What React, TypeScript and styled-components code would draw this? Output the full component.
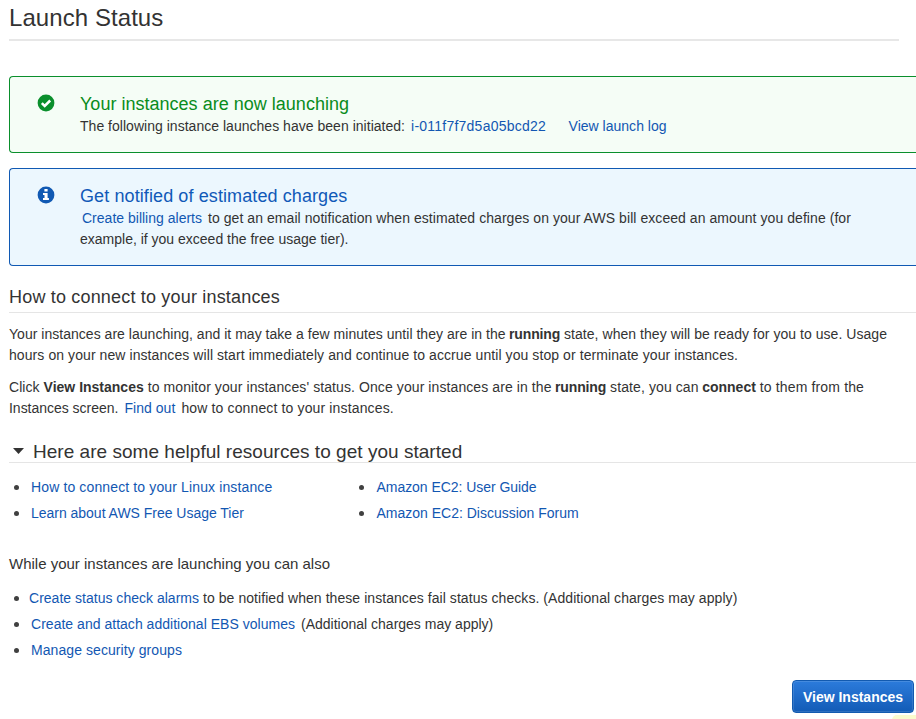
import React from "react";
import styled, { createGlobalStyle } from "styled-components";

const GlobalStyle = createGlobalStyle`
  * { box-sizing: border-box; }
  html, body { margin: 0; padding: 0; background: #fff; overflow: hidden; }
  body { font-family: "Liberation Sans", Arial, Helvetica, sans-serif; font-size: 14px; color: #333; }
  h1, h2, h3, p, ul { margin: 0; padding: 0; font-weight: 400; }
`;

type Tone = "success" | "info";
const tones = {
  success: { line: "#0a8f2c", fill: "#f5fdf6", title: "#098c1c" },
  info: { line: "#1059b3", fill: "#ecf7fe", title: "#1059b8" },
};

const Page = styled.main`
  width: 916px;
  height: 719px;
  padding-left: 9px;
  display: flex;
  flex-direction: column;
  overflow: hidden;
  & > * { flex: none; }
`;

const PageTitle = styled.h1`
  width: 890px;
  height: 41px;
  padding-top: 4px;
  border-bottom: 2px solid #e7e7e7;
  font-size: 24px;
  line-height: 28px;
  letter-spacing: 0.07px;
  margin-bottom: 35px;
`;

const Alert = styled.section<{ $tone: Tone; $height: number }>`
  display: flex;
  height: ${(p) => p.$height}px;
  padding: 16px 0 0 27px;
  border: 1px solid ${(p) => tones[p.$tone].line};
  border-right: 0;
  border-radius: 4px 0 0 4px;
  background: ${(p) => tones[p.$tone].fill};
  margin-bottom: 15px;
`;

const AlertIcon = styled.svg`
  flex: none;
  width: 18px;
  height: 18px;
  margin: 1px 25px 0 0;
`;

const AlertTitle = styled.h2<{ $tone: Tone; $ls: number }>`
  height: 23px;
  font-size: 18px;
  line-height: 22px;
  letter-spacing: ${(p) => p.$ls}px;
  color: ${(p) => tones[p.$tone].title};
`;

const Line = styled.div`
  height: 21px;
  line-height: 21px;
  white-space: nowrap;
`;

const Run = styled.span<{ $ls?: number; $gap?: number }>`
  letter-spacing: ${(p) => p.$ls ?? 0}px;
  margin-left: ${(p) => p.$gap ?? 0}px;
`;

const Strong = styled(Run).attrs({ as: "strong" })`
  font-weight: 700;
`;

const Link = styled.a<{ $ls?: number; $gap?: number }>`
  color: #1257b2;
  text-decoration: none;
  letter-spacing: ${(p) => p.$ls ?? 0}px;
  margin-left: ${(p) => p.$gap ?? 0}px;
`;

const SectionTitle = styled.h2`
  height: 28px;
  margin-top: 4px;
  border-bottom: 1px solid #e5e5e5;
  font-size: 18px;
  line-height: 24px;
  letter-spacing: 0.183px;
`;

const Paragraph = styled.div`
  margin-top: 11px;
`;

const ResourcesTitle = styled.h2`
  display: flex;
  align-items: center;
  height: 23px;
  margin-top: 21px;
  padding-left: 4px;
  border-bottom: 1px solid #e5e5e5;
  font-size: 19px;
  line-height: 22px;
  letter-spacing: 0.03px;
`;

const ResourcesLabel = styled.span`
  padding-top: 2px;
`;

const Caret = styled.svg`
  width: 11px;
  height: 6px;
  margin-right: 9px;
`;

const Columns = styled.div`
  display: grid;
  grid-template-columns: 345.5px 1fr;
  margin-top: 11px;
`;

const List = styled.ul`
  list-style: none;
`;

const Item = styled.li<{ $inset?: number }>`
  display: flex;
  align-items: center;
  height: 26px;
  padding-left: 4px;
  white-space: nowrap;
  &::before {
    content: "";
    flex: none;
    width: 5px;
    height: 5px;
    margin: 1px ${(p) => p.$inset ?? 12.5}px 0 0.5px;
    border-radius: 50%;
    background: #404040;
  }
`;

const Subheading = styled.h3`
  margin: 27px 0 11px;
  font-size: 15px;
  line-height: 21px;
`;

const Footer = styled.footer`
  display: flex;
  flex-direction: column;
  align-items: flex-end;
  margin-top: 17px;
`;

const PrimaryButton = styled.button`
  width: 122px;
  height: 33px;
  margin: 0 2px 2px 0;
  padding: 0;
  border: 1px solid #125ab0;
  border-radius: 4px;
  background: linear-gradient(#2c7bdb, #125bb6);
  box-shadow: inset 0 0 0 1px rgba(255, 255, 255, 0.12);
  color: #fff;
  font: 700 14px/20px "Liberation Sans", Arial, sans-serif;
`;

const Hint = styled.div`
  width: 24px;
  height: 10px;
  border-radius: 5px 0 0 0;
  background: #fbfbcd;
`;

export default function App() {
  return (
    <>
      <GlobalStyle />
      <Page>
        <PageTitle>Launch Status</PageTitle>

        <Alert $tone="success" $height={77}>
          <AlertIcon viewBox="0 0 18 18">
            <circle cx="9" cy="9" r="8.4" fill="#0a8f2c" />
            <path d="M4.8 9.1 7.7 12 13.2 6.5" fill="none" stroke="#fff" strokeWidth="2.5" />
          </AlertIcon>
          <div>
            <AlertTitle $tone="success" $ls={0.015}>Your instances are now launching</AlertTitle>
            <Line>
              <Run $ls={0.024}>The following instance launches have been initiated:</Run>
              <Link $gap={6} $ls={0.236}>i-011f7f7d5a05bcd22</Link>
              <Link $gap={22.5} $ls={0.013}>View launch log</Link>
            </Line>
          </div>
        </Alert>

        <Alert $tone="info" $height={98}>
          <AlertIcon viewBox="0 0 18 18">
            <circle cx="9" cy="9" r="8.4" fill="#1059b3" />
            <path d="M7.4 3h3.2v2.6H7.4zM6 7h4.6v5.1h1.3v2H6v-2h1.5V9H6z" fill="#fff" />
          </AlertIcon>
          <div>
            <AlertTitle $tone="info" $ls={0.1}>Get notified of estimated charges</AlertTitle>
            <Line>
              <Link $gap={2} $ls={0.008}>Create billing alerts</Link>
              <Run $gap={6} $ls={0.06}>to get an email notification when estimated charges on your AWS bill exceed an amount you define (for</Run>
            </Line>
            <Line>example, if you exceed the free usage tier).</Line>
          </div>
        </Alert>

        <SectionTitle>How to connect to your instances</SectionTitle>
        <Paragraph>
          <Line>
            <Run $ls={0.026}>Your instances are launching, and it may take a few minutes until they are in the</Run>
            <Strong $gap={3.5} $ls={-0.157}>running</Strong>
            <Run $gap={4} $ls={0.045}>state, when they will be ready for you to use. Usage</Run>
          </Line>
          <Line>
            <Run $ls={0.079}>hours on your new instances will start immediately and continue to accrue until you stop or terminate your instances.</Run>
          </Line>
        </Paragraph>
        <Paragraph>
          <Line>
            <Run $ls={0.05}>Click</Run>
            <Strong $gap={4}>View Instances</Strong>
            <Run $gap={4} $ls={0.09}>to monitor your instances' status. Once your instances are in the</Run>
            <Strong $gap={3.5} $ls={-0.157}>running</Strong>
            <Run $gap={4} $ls={0.1}>state, you can</Run>
            <Strong $gap={3.5}>connect</Strong>
            <Run $gap={4} $ls={0.14}>to them from the</Run>
          </Line>
          <Line>
            <Run $ls={-0.02}>Instances screen.</Run>
            <Link $gap={6} $ls={0.05}>Find out</Link>
            <Run $gap={6} $ls={0.14}>how to connect to your instances.</Run>
          </Line>
        </Paragraph>

        <ResourcesTitle>
          <Caret viewBox="0 0 11 6"><path d="M0 0h11L5.5 6z" fill="#333" /></Caret>
          <ResourcesLabel>Here are some helpful resources to get you started</ResourcesLabel>
        </ResourcesTitle>
        <Columns>
          <List>
            <Item><Link $ls={0.13}>How to connect to your Linux instance</Link></Item>
            <Item><Link $ls={-0.02}>Learn about AWS Free Usage Tier</Link></Item>
          </List>
          <List>
            <Item><Link $ls={-0.049}>Amazon EC2: User Guide</Link></Item>
            <Item><Link $ls={-0.005}>Amazon EC2: Discussion Forum</Link></Item>
          </List>
        </Columns>

        <Subheading>While your instances are launching you can also</Subheading>
        <List>
          <Item $inset={10.5}>
            <Link $ls={0.015}>Create status check alarms</Link>
            <Run $gap={4} $ls={0.06}>to be notified when these instances fail status checks. (Additional charges may apply)</Run>
          </Item>
          <Item>
            <Link $ls={0.024}>Create and attach additional EBS volumes</Link>
            <Run $gap={6}>(Additional charges may apply)</Run>
          </Item>
          <Item><Link $ls={0.072}>Manage security groups</Link></Item>
        </List>

        <Footer>
          <PrimaryButton>View Instances</PrimaryButton>
          <Hint />
        </Footer>
      </Page>
    </>
  );
}
